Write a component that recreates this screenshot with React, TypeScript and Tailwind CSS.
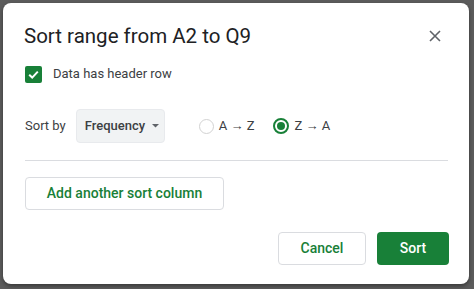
import React from "react";

export default function App() {
  const font = { fontFamily: "Roboto, 'Noto Sans', sans-serif" };
  return (
    <div className="w-[474px] h-[289px] bg-[#5c5c5c] pl-[3px] pt-[3px] overflow-hidden" style={font}>
      <div className="w-[466px] h-[281px] bg-white rounded-[8px] shadow-[0_2px_4px_rgba(0,0,0,0.4)] pl-[21px] pr-[20px] pt-[19px] flex flex-col">
        <div className="flex items-center justify-between h-[28px]">
          <div className="text-[20.5px] leading-[28px] text-[#202124]">Sort range from A2 to Q9</div>
          <svg width="12" height="12" viewBox="0 0 12 12" className="mr-[8px]">
            <path d="M1 1 L11 11 M11 1 L1 11" stroke="#5f6368" strokeWidth="1.6" />
          </svg>
        </div>
        <div className="flex items-center mt-[15px] h-[18px] pl-[1px]">
          <div className="w-[17px] h-[17px] rounded-[2px] bg-[#188038] flex items-center justify-center">
            <svg width="13" height="13" viewBox="0 0 13 13">
              <path d="M2.2 6.8 L5.2 9.6 L10.8 3.6" stroke="white" strokeWidth="2" fill="none" />
            </svg>
          </div>
          <span className="ml-[11px] text-[13px] text-[#3c4043]">Data has header row</span>
        </div>
        <div className="flex items-center mt-[26px] h-[34px] pl-[1px]">
          <span className="text-[13px] text-[#3c4043]">Sort by</span>
          <div className="ml-[10px] w-[89px] h-[34px] bg-[#f1f3f4] border border-[#e8eaed] rounded-[4px] flex items-center pl-[8px]">
            <span className="text-[13px] font-medium text-[#3c4043]">Frequency</span>
            <svg width="7" height="4" viewBox="0 0 7 4" className="ml-[7px]">
              <path d="M0 0 L7 0 L3.5 3.5 Z" fill="#5f6368" />
            </svg>
          </div>
          <div className="ml-[34px] flex items-center">
            <div className="w-[15px] h-[15px] rounded-full border-[1.5px] border-[#d2d2d2]" />
            <span className="ml-[5px] text-[13px] text-[#3c4043]">A → Z</span>
          </div>
          <div className="ml-[19px] flex items-center">
            <div className="w-[16px] h-[16px] rounded-full border-[2px] border-[#188038] flex items-center justify-center">
              <div className="w-[8px] h-[8px] rounded-full bg-[#188038]" />
            </div>
            <span className="ml-[5px] text-[13px] text-[#3c4043]">Z → A</span>
          </div>
        </div>
        <div className="mt-[17px] h-px bg-[#dadce0] ml-[1px] mr-[1px]" />
        <div className="mt-[16px] pl-[1px]">
          <button className="w-[199px] h-[33px] border border-[#dadce0] rounded-[4px] text-[14px] font-medium text-[#188038] bg-white">
            Add another sort column
          </button>
        </div>
        <div className="mt-[22px] flex justify-end gap-[11px]">
          <button className="w-[88px] h-[33px] border border-[#dadce0] rounded-[4px] text-[14px] font-medium text-[#188038] bg-white">
            Cancel
          </button>
          <button className="w-[72px] h-[33px] rounded-[4px] text-[14px] font-medium text-white bg-[#188038]">
            Sort
          </button>
        </div>
      </div>
    </div>
  );
}
